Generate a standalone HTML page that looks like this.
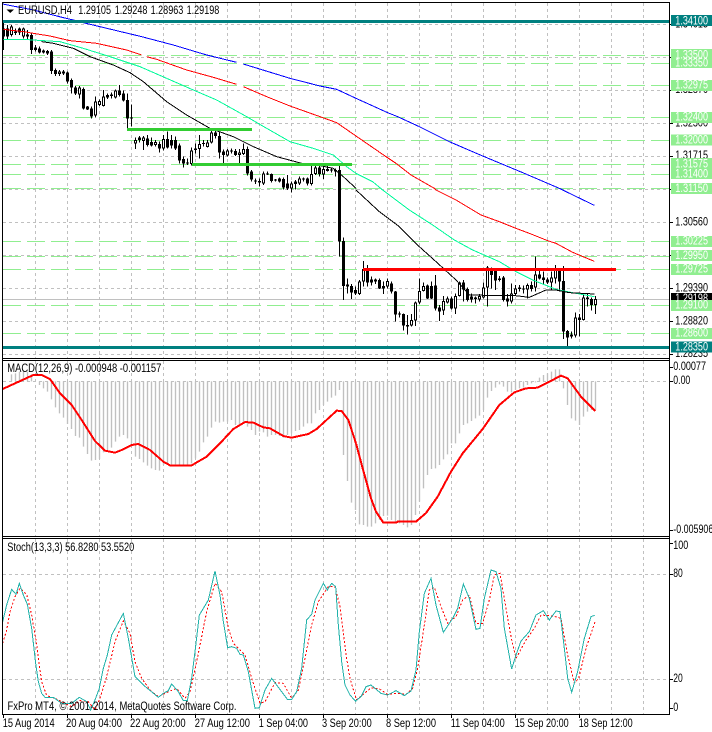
<!DOCTYPE html>
<html><head><meta charset="utf-8"><title>EURUSD H4</title>
<style>html,body{margin:0;padding:0;background:#fff}svg{display:block}text{font-family:"Liberation Sans",sans-serif;font-size:11.5px;fill:#000}.w text,text.w{fill:#fff}</style></head>
<body>
<svg xmlns="http://www.w3.org/2000/svg" width="712" height="732" viewBox="0 0 712 732">
<rect width="712" height="732" fill="#fff"/>
<g shape-rendering="crispEdges" fill="none">
<!-- vertical grid -->
<g stroke="#c0c0c0" stroke-dasharray="3 3">
<path d="M35.5 3V358M67.5 3V358M99.5 3V358M131.5 3V358M163.5 3V358M195.5 3V358M227.5 3V358M259.5 3V358M291.5 3V358M323.5 3V358M355.5 3V358M387.5 3V358M419.5 3V358M451.5 3V358M483.5 3V358M515.5 3V358M547.5 3V358M579.5 3V358M611.5 3V358M643.5 3V358"/>
<path d="M35.5 361V536M67.5 361V536M99.5 361V536M131.5 361V536M163.5 361V536M195.5 361V536M227.5 361V536M259.5 361V536M291.5 361V536M323.5 361V536M355.5 361V536M387.5 361V536M419.5 361V536M451.5 361V536M483.5 361V536M515.5 361V536M547.5 361V536M579.5 361V536M611.5 361V536M643.5 361V536"/>
<path d="M35.5 539V714M67.5 539V714M99.5 539V714M131.5 539V714M163.5 539V714M195.5 539V714M227.5 539V714M259.5 539V714M291.5 539V714M323.5 539V714M355.5 539V714M387.5 539V714M419.5 539V714M451.5 539V714M483.5 539V714M515.5 539V714M547.5 539V714M579.5 539V714M611.5 539V714M643.5 539V714"/>
<path d="M3 24.5H669M3 57.5H669M3 90.5H669M3 123.5H669M3 156.5H669M3 189.5H669M3 222.5H669M3 255.5H669M3 288.5H669M3 321.5H669M3 354.5H669M3 381.5H669M3 574.5H669M3 679.5H669"/>
</g>
<!-- green levels -->
<path stroke="#90ee90" stroke-dasharray="18 6" d="M3 55.5H669M3 63.5H669M3 85.5H669M3 117.5H669M3 140.5H669M3 164.5H669M3 174.5H669M3 188.5H669M3 241.5H669M3 256.5H669M3 269.5H669M3 305.5H669M3 333.5H669"/>
<path stroke="#c0c0c0" d="M3 299.5H669"/>
<!-- candles left -->
<g transform="translate(.17 0) scale(.33333)">
<path stroke="#000" stroke-width="3" d="M10 65V150M22 75V120M34 75V110M46 85V105M58 82V105M70 82V115M82 90V118M94 98V162M106 135V155M118 140V160M130 148V160M142 150V165M154 150V222M166 205V228M178 210V228M190 210V225M202 215V250M214 235V280M226 258V285M238 258V295M250 263V328M262 318V330M274 320V355M286 290V352M298 298V318M310 270V320M322 280V297M334 278V296M346 268V296M358 255V290M370 272V305M382 280V388M394 313V380M406 412V447M418 408V428M430 408V450M442 405V440M454 412V440M466 420V440M478 425V458M490 405V452M502 395V445M514 405V445M526 410V450M538 430V490M550 470V503M562 475V495M574 443V497M586 430V460M598 405V475M610 420V440M622 420V443M634 390V430M646 386V415M658 395V475M670 448V490M682 447V470M694 446V460M706 447V468M718 447V490M730 430V465M742 440V527M754 510V545M766 535V552M778 535V560M790 515V555M802 515V525M814 520V547M826 537V545M838 533V548M850 533V568M862 525V570M874 545V578M886 540V568M898 530V555M910 532V545M922 532V556M934 495V556M946 490V525M958 497V530M970 497V537M982 498V515M994 505V517M1006 505V530M1018 495V770M1030 712V900M1042 835V880M1054 852V897M1066 860V885"/>
<path stroke="#000" stroke-width="9" d="M10 85V110M22 85V110M34 80V105M46 95V99M58 85V97M70 85V110M82 103V110M94 105V150M106 143V150M118 145V158M130 152V157M142 153V160M154 155V213M166 210V222M178 215V222M190 215V220M202 218V245M214 240V263M226 262V280M238 263V283M250 267V325M262 320V328M274 325V350M286 305V347M298 303V315M310 290V318M322 285V293M334 284V288M346 272V293M358 272V285M370 280V302M382 300V355M394 352V355M406 420V431M418 412V420M430 412V423M442 415V435M454 426V437M466 426V435M478 432V445M490 417V445M502 417V442M514 420V437M526 420V445M538 437V482M550 477V490M562 488V491M574 452V492M586 445V450M598 432V447M610 429V432M622 427V441M634 398V427M646 398V408M658 408V458M670 455V465M682 452V467M694 452V455M706 453V465M718 458V465M730 447V462M742 447V520M754 515V538M766 541V545M778 543V547M790 520V550M802 520V524M814 522V543M826 538V542M838 536V545M850 537V562M862 550V565M874 550V565M886 545V552M898 535V551M910 535V539M922 536V550M934 522V552M946 503V522M958 503V522M970 507V523M982 507V513M994 508V512M1006 510V514M1018 510V725M1030 723V858M1042 853V860M1054 858V878M1066 870V880"/>
<path stroke="#fff" stroke-width="3" d="M34 83V102M70 88V107M178 218V219M238 266V280M286 308V344M298 306V312M310 293V315M334 286V286M346 275V290M406 423V428M430 415V420M466 429V432M490 420V442M574 455V489M586 447V447M598 435V444M622 430V438M634 401V424M682 455V464M718 461V462M730 450V459M790 523V547M802 522V522M874 553V562M898 538V548M934 525V549M946 506V519M970 510V520"/>
</g>
<!-- candles right -->
<g transform="translate(356.17 190) scale(.33333)">
<path stroke="#000" stroke-width="3" d="M10 270V315M22 213V290M34 225V290M46 260V287M58 265V282M70 265V297M82 275V312M94 265V295M106 275V310M118 303V395M130 365V382M142 370V422M154 375V433M166 372V410M178 335V408M190 265V342M202 278V305M214 283V327M226 275V327M238 255V362M250 345V393M262 318V375M274 320V340M286 320V358M298 310V372M310 275V320M322 270V335M334 293V335M346 310V337M358 320V340M370 312V335M382 278V325M394 228V350M406 232V295M418 236V300M430 258V275M442 258V335M454 312V350M466 280V340M478 285V315M490 285V305M502 287V310M514 280V325M526 275V305M538 200V305M550 238V268M562 245V282M574 262V282M586 245V300M598 225V280M610 235V305M622 228V447M634 420V475M646 425V445M658 368V442M670 372V440M682 312V392M694 312V350M706 322V362M718 318V372"/>
<path stroke="#000" stroke-width="9" d="M10 275V312M22 237V275M34 237V277M46 268V278M58 268V275M70 270V295M82 288V295M94 273V290M106 280V305M118 305V373M130 370V374M142 372V407M154 405V410M166 390V407M178 337V392M190 303V338M202 288V303M214 287V325M226 288V325M238 287V355M250 352V365M262 333V362M274 325V337M286 325V355M298 318V355M310 278V318M322 278V298M334 297V330M346 320V328M358 323V327M370 318V328M382 292V322M394 233V292M406 238V255M418 240V272M430 266V270M442 262V330M454 325V335M466 310V335M478 295V312M490 293V297M502 295V299M514 285V298M526 285V297M538 253V293M550 253V265M562 262V270M574 268V278M586 262V278M598 240V265M610 240V275M622 273V425M634 423V443M646 433V440M658 382V437M670 382V390M682 323V390M694 323V327M706 327V345M718 327V345"/>
<path stroke="#fff" stroke-width="3" d="M13 278V309M25 240V272M97 276V287M169 393V404M181 340V389M193 306V335M205 291V300M265 336V359M277 328V334M301 321V352M313 281V315M373 321V325M385 295V319M397 236V289M469 313V332M481 298V309M517 288V295M541 256V290M589 265V275M601 243V262M649 436V437M661 385V434M685 326V387M721 330V342" transform="translate(-3 0)"/>
</g>
<!-- MAs left -->
<g transform="scale(.33333)" stroke-width="3">
<polyline stroke="#0000ff" points="8,12 100,30 190,53 220,60 258,70 350,92 425,110 520,135 620,165 710,187"/>
<polyline stroke="#0000ff" points="730,192 870,235 960,258 1010,268 1068,295"/>
<polyline stroke="#ff0000" points="10,88 70,95 100,100 150,108 210,122 290,130 380,150 425,165"/>
<polyline stroke="#ff0000" points="440,170 470,178 560,210 640,232 710,253"/>
<polyline stroke="#ff0000" points="730,260 800,290 870,318 960,350 1010,368 1068,408"/>
<polyline stroke="#00fa9a" points="10,118 70,118 130,122 180,125 250,145 330,170 420,200 500,235 580,270 650,300 740,350 800,385 870,425 940,445 1000,465 1040,500 1068,520"/>
<polyline stroke="#000" points="125,125 160,130 220,145 270,170 340,195 390,218 430,245 500,305 560,345 630,385 700,410 760,440 830,470 905,490 960,497 1000,505 1030,530 1068,565"/>
</g>
<!-- MAs right -->
<g transform="translate(356 190) scale(.33333)" stroke-width="3">
<polyline stroke="#0000ff" points="0,-275 95,-232 125,-220 190,-190 280,-145 380,-102 440,-77 500,-52 610,-5 620,0 715,46"/>
<polyline stroke="#ff0000" points="0,-162 90,-100 120,-80 165,-45 235,-5 240,0 300,30 375,75 430,95 480,115 520,130 575,152 600,160 650,187 715,214"/>
<polyline stroke="#00fa9a" points="0,-50 50,-25 80,0 160,60 230,105 295,150 350,180 430,215 480,245 530,270 600,298 660,310 715,320"/>
<polyline stroke="#000" points="0,0 70,65 130,110 190,170 240,215 300,270 340,315 390,316 470,316 520,322 570,300 600,300 640,308 715,312"/>
</g>
<!-- thick lines -->
<path stroke="#32cd32" stroke-width="3" d="M127 129.5H252M192 164.5H352"/>
<path stroke="#ff0000" stroke-width="3" d="M363 269.5H616"/>
<path stroke="#008080" stroke-width="3" d="M3 21.5H670M3 347.5H670"/>
<!-- MACD -->
<g transform="translate(.17 355) scale(.33333)" shape-rendering="geometricPrecision">
<path stroke="#c0c0c0" stroke-width="4" d="M34 79V58M46 79V55M58 79V50M70 79V48M82 79V50M94 79V58M118 79V90M130 79V100M142 79V110M154 79V133M166 79V157M178 79V175M190 79V188M202 79V207M214 79V222M226 79V243M238 79V248M250 79V275M262 79V297M274 79V317M286 79V315M298 79V312M310 79V292M322 79V285M334 79V278M346 79V260M358 79V245M370 79V240M382 79V250M394 79V270M406 79V305M418 79V312M430 79V322M442 79V332M454 79V340M466 79V345M478 79V347M490 79V330M502 79V328M514 79V328M526 79V328M538 79V330M550 79V333M562 79V330M574 79V325M586 79V310M598 79V290M610 79V262M622 79V245M634 79V218M646 79V200M658 79V203M670 79V200M682 79V200M694 79V195M706 79V210M718 79V210M730 79V200M742 79V215M754 79V225M766 79V240M778 79V230M790 79V232M802 79V245M814 79V240M826 79V240M838 79V243M850 79V248M862 79V240M874 79V235M886 79V228M898 79V225M910 79V215M922 79V205M934 79V205M946 79V175M958 79V165M970 79V150M982 79V140M994 79V128M1006 79V122M1018 79V105M1030 79V300M1042 79V378M1054 79V443M1066 79V465"/>
</g>
<g transform="translate(356.17 355) scale(.33333)" shape-rendering="geometricPrecision">
<path stroke="#c0c0c0" stroke-width="4" d="M10 79V508M22 79V510M34 79V515M46 79V515M58 79V505M70 79V495M82 79V483M94 79V482M106 79V495M118 79V500M130 79V505M142 79V510M154 79V517M166 79V510M178 79V480M190 79V440M202 79V400M214 79V360M226 79V342M238 79V340M250 79V330M262 79V313M274 79V298M286 79V265M298 79V265M310 79V235M322 79V210M334 79V205M346 79V198M358 79V190M370 79V182M382 79V165M394 79V128M406 79V108M418 79V98M430 79V88M442 79V95M454 79V110M466 79V112M478 79V105M490 79V100M502 79V98M514 79V90M526 79V85M538 79V82M550 79V68M562 79V60M574 79V55M586 79V50M598 79V43M610 79V43M622 79V100M634 79V150M646 79V190M658 79V197M670 79V210M682 79V185M694 79V170M706 79V165M718 79V165"/>
</g>
<g transform="translate(0 355) scale(.33333)" stroke="#ff0000" stroke-width="6">
<polyline points="8,102 100,60 125,60 150,72 180,115 215,150 245,195 285,258 315,287 345,293 365,285 395,270 415,267 450,285 490,320 510,331 575,331 620,305 660,265 700,222 735,201 760,203 790,217 810,220 850,243 875,248 925,237 950,222 1010,167 1025,168 1045,195 1068,265"/>
</g>
<g transform="translate(356 355) scale(.33333)" stroke="#ff0000" stroke-width="6">
<polyline points="0,265 20,340 45,430 60,470 82,503 120,503 125,500 180,500 210,474 245,425 285,350 320,295 380,222 430,150 475,112 510,100 545,98 615,62 635,70 675,125 718,168"/>
</g>
<!-- Stoch -->
<g transform="translate(0 535) scale(.33333)" stroke-width="3">
<polyline stroke="#ff0000" stroke-dasharray="6 6" points="8,325 20,285 30,230 45,185 60,160 80,178 95,240 107,310 125,440 140,482 165,490 185,500 215,515 240,497 265,500 285,525 300,490 320,425 345,320 370,258 390,295 405,380 425,430 450,465 475,485 505,470 530,460 555,490 570,470 590,380 620,230 645,145 665,170 685,280 700,325 735,360 755,430 780,505 795,500 825,443 850,445 875,490 895,465 915,370 935,270 955,200 985,155 1005,155 1020,215 1040,370 1050,430 1068,490"/>
<polyline stroke="#20b2aa" points="8,260 20,210 35,163 48,178 58,145 70,180 82,208 95,280 107,385 115,440 125,475 135,487 160,487 185,505 215,505 238,487 260,500 272,525 285,495 298,460 310,400 322,360 335,300 370,235 385,310 405,425 430,450 475,487 490,475 505,467 515,447 535,470 550,497 562,497 575,430 585,350 598,240 610,220 625,195 645,108 660,180 670,260 683,338 695,335 710,340 720,358 730,360 745,410 765,520 778,518 795,465 815,430 830,450 862,493 875,493 890,470 905,400 920,255 935,238 945,195 970,145 982,165 995,145 1007,155 1015,270 1025,380 1035,450 1050,480 1068,500"/>
</g>
<g transform="translate(356 535) scale(.33333)" stroke-width="3">
<polyline stroke="#ff0000" stroke-dasharray="6 6" points="0,495 20,480 45,458 70,462 95,478 125,475 150,478 170,460 185,400 205,270 220,165 235,157 255,215 275,265 300,245 320,195 340,180 360,265 380,265 400,195 415,120 432,115 450,220 465,305 480,370 510,315 535,280 555,240 590,243 615,250 635,360 655,445 668,430 690,340 718,258"/>
<polyline stroke="#20b2aa" points="0,497 15,485 30,455 45,450 75,475 95,480 120,467 145,482 165,468 180,405 190,290 205,175 225,130 240,210 262,292 290,250 305,220 322,147 340,190 360,283 372,280 385,190 405,105 420,110 435,160 445,280 467,402 480,360 495,318 520,290 540,240 562,227 580,255 600,228 612,230 625,340 635,430 647,472 665,410 685,310 705,245 716,241"/>
</g>
<!-- frames -->
<path stroke="#000" d="M2.5 2.5H669.5V714.5H2.5ZM2.5 358.5H669.5M2.5 360.5H669.5M2.5 536.5H669.5M2.5 538.5H669.5"/>
<path stroke="#000" d="M670 24.5h3M670 57.5h3M670 90.5h3M670 123.5h3M670 156.5h3M670 189.5h3M670 222.5h3M670 255.5h3M670 288.5h3M670 321.5h3M670 354.5h3M670 367.5h3M670 381.5h3M670 530.5h3M670 543.5h3M670 574.5h3M670 679.5h3M670 708.5h3"/>
<path stroke="#000" d="M3.5 714V718M67.5 714V718M131.5 714V718M195.5 714V718M259.5 714V718M323.5 714V718M387.5 714V718M451.5 714V718M515.5 714V718M579.5 714V718"/>
</g>
<!-- title -->
<polygon points="6.500,9.500 14,9.500 10.250,13" fill="#000"/>
<text x="18" y="14" textLength="54" lengthAdjust="spacingAndGlyphs">EURUSD,H4</text>
<text x="78.3" y="14" textLength="32.7" lengthAdjust="spacingAndGlyphs">1.29105</text>
<text x="114.7" y="14" textLength="32.7" lengthAdjust="spacingAndGlyphs">1.29248</text>
<text x="150.6" y="14" textLength="32.7" lengthAdjust="spacingAndGlyphs">1.28963</text>
<text x="186.6" y="14" textLength="32.7" lengthAdjust="spacingAndGlyphs">1.29198</text>
<text x="7.3" y="372" textLength="154" lengthAdjust="spacingAndGlyphs">MACD(12,26,9) -0.000948 -0.001157</text>
<text x="7.3" y="551" textLength="127" lengthAdjust="spacingAndGlyphs">Stoch(13,3,3) 56.8280 53.5520</text>
<text x="7.5" y="710" textLength="229" lengthAdjust="spacingAndGlyphs">FxPro MT4, © 2001-2014, MetaQuotes Software Corp.</text>
<!-- right axis black -->
<g>
<text x="675.3" y="27.5" textLength="32.7" lengthAdjust="spacingAndGlyphs">1.34015</text>
<text x="675.3" y="60.5" textLength="32.7" lengthAdjust="spacingAndGlyphs">1.33440</text>
<text x="675.3" y="93" textLength="32.7" lengthAdjust="spacingAndGlyphs">1.32870</text>
<text x="675.3" y="126.5" textLength="32.7" lengthAdjust="spacingAndGlyphs">1.32300</text>
<text x="675.3" y="159" textLength="32.7" lengthAdjust="spacingAndGlyphs">1.31715</text>
<text x="675.3" y="192" textLength="32.7" lengthAdjust="spacingAndGlyphs">1.31150</text>
<text x="675.3" y="225.5" textLength="32.7" lengthAdjust="spacingAndGlyphs">1.30560</text>
<text x="675.3" y="258.5" textLength="32.7" lengthAdjust="spacingAndGlyphs">1.29975</text>
<text x="675.3" y="291.5" textLength="32.7" lengthAdjust="spacingAndGlyphs">1.29390</text>
<text x="675.3" y="324.5" textLength="32.7" lengthAdjust="spacingAndGlyphs">1.28820</text>
<text x="675.3" y="357" textLength="32.7" lengthAdjust="spacingAndGlyphs">1.28235</text>
<text x="673.3" y="370" textLength="32.7" lengthAdjust="spacingAndGlyphs">0.00077</text>
<text x="673.3" y="384" textLength="17" lengthAdjust="spacingAndGlyphs">0.00</text>
<text x="673.3" y="533" textLength="40" lengthAdjust="spacingAndGlyphs">-0.005906</text>
<text x="673.3" y="549" textLength="15" lengthAdjust="spacingAndGlyphs">100</text>
<text x="673.3" y="577" textLength="9.5" lengthAdjust="spacingAndGlyphs">80</text>
<text x="673.3" y="682" textLength="9.5" lengthAdjust="spacingAndGlyphs">20</text>
<text x="673.3" y="711" textLength="5" lengthAdjust="spacingAndGlyphs">0</text>
</g>
<!-- label rects -->
<g shape-rendering="crispEdges">
<rect x="671" y="49" width="41" height="11" fill="#90ee90"/>
<rect x="671" y="57" width="41" height="11" fill="#90ee90"/>
<rect x="671" y="80" width="41" height="11" fill="#90ee90"/>
<rect x="671" y="112" width="41" height="11" fill="#90ee90"/>
<rect x="671" y="134.500" width="41" height="11" fill="#90ee90"/>
<rect x="671" y="158" width="41" height="11" fill="#90ee90"/>
<rect x="671" y="168" width="41" height="11" fill="#90ee90"/>
<rect x="671" y="183" width="41" height="11" fill="#90ee90"/>
<rect x="671" y="236" width="41" height="11" fill="#90ee90"/>
<rect x="671" y="250" width="41" height="11" fill="#90ee90"/>
<rect x="671" y="264" width="41" height="11" fill="#90ee90"/>
<rect x="671" y="293" width="41" height="9" fill="#000"/>
<rect x="671" y="300" width="41" height="11" fill="#90ee90"/>
<rect x="671" y="328" width="41" height="11" fill="#90ee90"/>
<rect x="671" y="15" width="41" height="11" fill="#008080"/>
<rect x="671" y="341.500" width="41" height="11" fill="#008080"/>
</g>
<g class="w">
<text x="675.3" y="24.500" textLength="32.7" lengthAdjust="spacingAndGlyphs">1.34100</text>
<text x="675.3" y="58.500" textLength="32.7" lengthAdjust="spacingAndGlyphs">1.33500</text>
<text x="675.3" y="66.500" textLength="32.7" lengthAdjust="spacingAndGlyphs">1.33350</text>
<text x="675.3" y="88.500" textLength="32.7" lengthAdjust="spacingAndGlyphs">1.32975</text>
<text x="675.3" y="120.500" textLength="32.7" lengthAdjust="spacingAndGlyphs">1.32400</text>
<text x="675.3" y="143.500" textLength="32.7" lengthAdjust="spacingAndGlyphs">1.32000</text>
<text x="675.3" y="167.500" textLength="32.7" lengthAdjust="spacingAndGlyphs">1.31575</text>
<text x="675.3" y="177.500" textLength="32.7" lengthAdjust="spacingAndGlyphs">1.31400</text>
<text x="675.3" y="192" textLength="32.7" lengthAdjust="spacingAndGlyphs">1.31150</text>
<text x="675.3" y="244.500" textLength="32.7" lengthAdjust="spacingAndGlyphs">1.30225</text>
<text x="675.3" y="259" textLength="32.7" lengthAdjust="spacingAndGlyphs">1.29950</text>
<text x="675.3" y="272.500" textLength="32.7" lengthAdjust="spacingAndGlyphs">1.29725</text>
<text x="675.3" y="302" textLength="32.7" lengthAdjust="spacingAndGlyphs">1.29198</text>
</g>
<rect x="671" y="300" width="41" height="11" fill="#90ee90" shape-rendering="crispEdges"/>
<g class="w">
<text x="675.3" y="308.500" textLength="32.7" lengthAdjust="spacingAndGlyphs">1.29100</text>
<text x="675.3" y="336.500" textLength="32.7" lengthAdjust="spacingAndGlyphs">1.28600</text>
<text x="675.3" y="350.500" textLength="32.7" lengthAdjust="spacingAndGlyphs">1.28350</text>
</g>
<!-- time axis -->
<text x="2.7" y="727" textLength="52" lengthAdjust="spacingAndGlyphs">15 Aug 2014</text>
<text x="66" y="727" textLength="56" lengthAdjust="spacingAndGlyphs">20 Aug 04:00</text>
<text x="130" y="727" textLength="55.700" lengthAdjust="spacingAndGlyphs">22 Aug 20:00</text>
<text x="194.700" y="727" textLength="55.300" lengthAdjust="spacingAndGlyphs">27 Aug 12:00</text>
<text x="258.700" y="727" textLength="49.300" lengthAdjust="spacingAndGlyphs">1 Sep 04:00</text>
<text x="322" y="727" textLength="49.700" lengthAdjust="spacingAndGlyphs">3 Sep 20:00</text>
<text x="386" y="727" textLength="50" lengthAdjust="spacingAndGlyphs">8 Sep 12:00</text>
<text x="450.700" y="727" textLength="54" lengthAdjust="spacingAndGlyphs">11 Sep 04:00</text>
<text x="514.700" y="727" textLength="54" lengthAdjust="spacingAndGlyphs">15 Sep 20:00</text>
<text x="578.700" y="727" textLength="54" lengthAdjust="spacingAndGlyphs">18 Sep 12:00</text>
</svg>
</body></html>
